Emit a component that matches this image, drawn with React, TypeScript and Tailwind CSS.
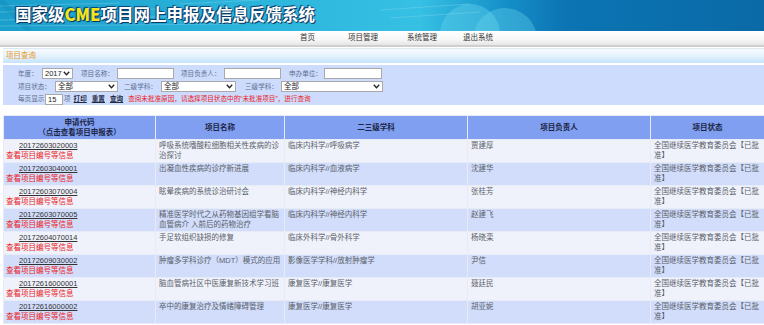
import React from "react";

const font = { fontFamily: '"Liberation Sans", "Noto Sans CJK SC", sans-serif' };

const navItems = [
  { label: "首页", w: "w-[48px]" },
  { label: "项目管理", w: "w-[59px]" },
  { label: "系统管理", w: "w-[56px]" },
  { label: "退出系统", w: "w-[40px]" },
];

const rows = [
  { code: "20172603020003", name: ["呼吸系统嗜酸粒细胞相关性疾病的诊", "治探讨"], subj: "临床内科学//呼吸病学", lead: "贾建厚" },
  { code: "20172603040001", name: ["出凝血性疾病的诊疗新进展"], subj: "临床内科学//血液病学", lead: "沈建华" },
  { code: "20172603070004", name: ["眩晕疾病的系统诊治研讨会"], subj: "临床内科学//神经内科学", lead: "张桂芳" },
  { code: "20172603070005", name: ["精准医学时代之从药物基因组学看脑", "血管病介 入前后的药物治疗"], subj: "临床内科学//神经内科学", lead: "赵建飞" },
  { code: "20172604070014", name: ["手足软组织缺损的修复"], subj: "临床外科学//骨外科学", lead: "杨晓栾" },
  { code: "20172609030002", name: ["肿瘤多学科诊疗（MDT）模式的应用"], subj: "影像医学学科//放射肿瘤学", lead: "尹信" },
  { code: "20172616000001", name: ["脑血管病社区中医康复新技术学习班"], subj: "康复医学//康复医学", lead: "聂廷民" },
  { code: "20172616000002", name: ["卒中的康复治疗及情绪障碍管理"], subj: "康复医学//康复医学", lead: "胡亚妮" },
];

function Chevron() {
  return (
    <svg width="7" height="5" viewBox="0 0 7 5" className="shrink-0">
      <path d="M0.8 0.8 L3.5 3.8 L6.2 0.8" fill="none" stroke="#222" strokeWidth="1.3" />
    </svg>
  );
}

function FakeSelect({ value, w }: { value: string; w: string }) {
  return (
    <div className={`${w} shrink-0 h-[11px] bg-white border border-[#a9a9a9] flex items-center justify-between pl-[2px] pr-[2px] text-[#222] text-[7.5px]`}>
      <span className="leading-none">{value}</span>
      <Chevron />
    </div>
  );
}

function FakeInput({ w, value }: { w: string; value?: string }) {
  return (
    <div className={`${w} shrink-0 h-[11px] bg-white border border-[#a9a9a9] flex items-center pl-[2px] text-[#222] text-[7.5px] leading-none`}>
      {value}
    </div>
  );
}

function Label({ text, w, ml }: { text: string; w: string; ml?: string }) {
  return <span className={`${w} ${ml ?? ""} shrink-0 whitespace-nowrap`}>{text}</span>;
}

export default function App() {
  return (
    <div className="w-[764px] h-[325px] overflow-hidden bg-white text-[7.5px]" style={font}>
      {/* banner */}
      <div className="relative h-[31px] bg-[linear-gradient(90deg,#1a9fcc_0%,#2db6dc_35%,#36c0e4_55%,#1590c9_66%,#0c74b3_74%,#0a6aa7_100%)] overflow-hidden">
        <svg className="absolute left-0 top-0" width="764" height="31">
          <circle cx="470" cy="34" r="30" fill="#5fd0ec" opacity="0.45" />
          <circle cx="505" cy="40" r="32" fill="#6ad6ef" opacity="0.35" />
          <path d="M0 6 L120 3 M0 12 L160 9 M0 20 L200 16 M0 26 L240 24 M180 4 L260 0 M380 10 L470 4 M390 18 L480 12" stroke="#8fdcef" strokeWidth="1" opacity="0.35" />
          <path d="M0 0 L30 31" stroke="#0f7fb0" strokeWidth="6" opacity="0.25" />
        </svg>
        <div className="absolute left-[15px] top-[4px] text-[16.5px] font-bold leading-[21px] text-white [text-shadow:0_0_2px_#0b3a66,1px_1px_0_#0b3a66,-1px_-1px_0_#0b4f80]" style={{ fontFamily: '"Noto Sans CJK SC", sans-serif' }}>
          国家级<span className="text-[#f5e61a] font-black">CME</span>项目网上申报及信息反馈系统
        </div>
      </div>

      {/* nav */}
      <div className="h-[16px] flex items-center pl-[300px] bg-[linear-gradient(180deg,#ffffff_0%,#f7f7f7_60%,#e6e6e6_100%)] border-b-2 border-[#cfcfcf] text-[#333]">
        {navItems.map((n) => (
          <span key={n.label} className={`${n.w} leading-none`}>{n.label}</span>
        ))}
      </div>

      <div className="pl-[3px] pt-[1px]">
        {/* section title */}
        <div className="h-[15px] flex items-center pl-[3px] text-[#eb9a27] bg-[linear-gradient(180deg,#f7fbff_0%,#e4f2fd_50%,#c6e3fa_100%)] border-t border-[#dfe9f2]">
          项目查询
        </div>

        {/* filter panel */}
        <div className="mt-[2px] h-[40px] bg-[#cddbfc] pl-[15px] pt-[3px] text-[#5d6f8e] text-[6.6px] flex flex-col gap-[1.5px]">
          <div className="h-[12px] flex items-center">
            <Label text="年度：" w="w-[24px]" />
            <FakeSelect value="2017" w="w-[31px]" />
            <Label text="项目名称：" w="w-[36px]" ml="ml-[8px]" />
            <FakeInput w="w-[57px]" />
            <Label text="项目负责人：" w="w-[43px]" ml="ml-[7px]" />
            <FakeInput w="w-[57px]" />
            <Label text="申办单位：" w="w-[35px]" ml="ml-[8px]" />
            <FakeInput w="w-[58px]" />
          </div>
          <div className="h-[12px] flex items-center">
            <Label text="项目状态：" w="w-[37px]" />
            <FakeSelect value="全部" w="w-[63px]" />
            <Label text="二级学科：" w="w-[37px]" ml="ml-[6px]" />
            <FakeSelect value="全部" w="w-[75px]" />
            <Label text="三级学科：" w="w-[36px]" ml="ml-[9px]" />
            <FakeSelect value="全部" w="w-[102px]" />
          </div>
          <div className="h-[12px] flex items-center">
            <Label text="每页显示" w="w-[27px]" />
            <FakeInput w="w-[18px]" value="15" />
            <span className="ml-[1px]">项</span>
            <span className="ml-[3px] font-bold underline text-[#1f2a44]">打印</span>
            <span className="ml-[5px] font-bold underline text-[#1f2a44]">重置</span>
            <span className="ml-[5px] font-bold underline text-[#1f2a44]">查询</span>
            <span className="ml-[5px] text-[#ec1c24] whitespace-nowrap">查阅未批准原因，请选择项目状态中的“未批准项目”，进行查询</span>
          </div>
        </div>

        {/* table */}
        <table className="mt-[10px] w-[761px] table-fixed border-collapse leading-[10px]">
          <colgroup>
            <col className="w-[152px]" />
            <col className="w-[129px]" />
            <col className="w-[183px]" />
            <col className="w-[183px]" />
            <col className="w-[114px]" />
          </colgroup>
          <thead>
            <tr className="h-[24px] bg-[#819ff0] text-[#1b2646] font-bold">
              <th className="border border-[#e6ebf6] font-bold text-center">
                <div>申请代码</div>
                <div>（点击查看项目申报表）</div>
              </th>
              <th className="border border-[#e6ebf6] font-bold">项目名称</th>
              <th className="border border-[#e6ebf6] font-bold">二三级学科</th>
              <th className="border border-[#e6ebf6] font-bold">项目负责人</th>
              <th className="border border-[#e6ebf6] font-bold">项目状态</th>
            </tr>
          </thead>
          <tbody>
            {rows.map((r, i) => (
              <tr key={r.code} className={`h-[23px] align-top text-[#5b5f6a] ${i % 2 === 0 ? "bg-[#eff2fb]" : "bg-[#d1ddfb]"}`}>
                <td className="border border-[#e6ebf6] pt-[1px] pl-[2px]">
                  <div className="pl-[13px] underline text-[#333]">{r.code}</div>
                  <div className="text-[#ec1c24]">查看项目编号等信息</div>
                </td>
                <td className="border border-[#e6ebf6] pt-[1px] px-[3px] whitespace-nowrap">
                  {r.name.map((l) => (
                    <div key={l}>{l}</div>
                  ))}
                </td>
                <td className="border border-[#e6ebf6] pt-[1px] px-[3px]">{r.subj}</td>
                <td className="border border-[#e6ebf6] pt-[1px] px-[3px]">{r.lead}</td>
                <td className="border border-[#e6ebf6] pt-[1px] px-[3px] whitespace-nowrap">
                  <div>全国继续医学教育委员会【已批</div>
                  <div>准】</div>
                </td>
              </tr>
            ))}
          </tbody>
        </table>
      </div>
    </div>
  );
}
